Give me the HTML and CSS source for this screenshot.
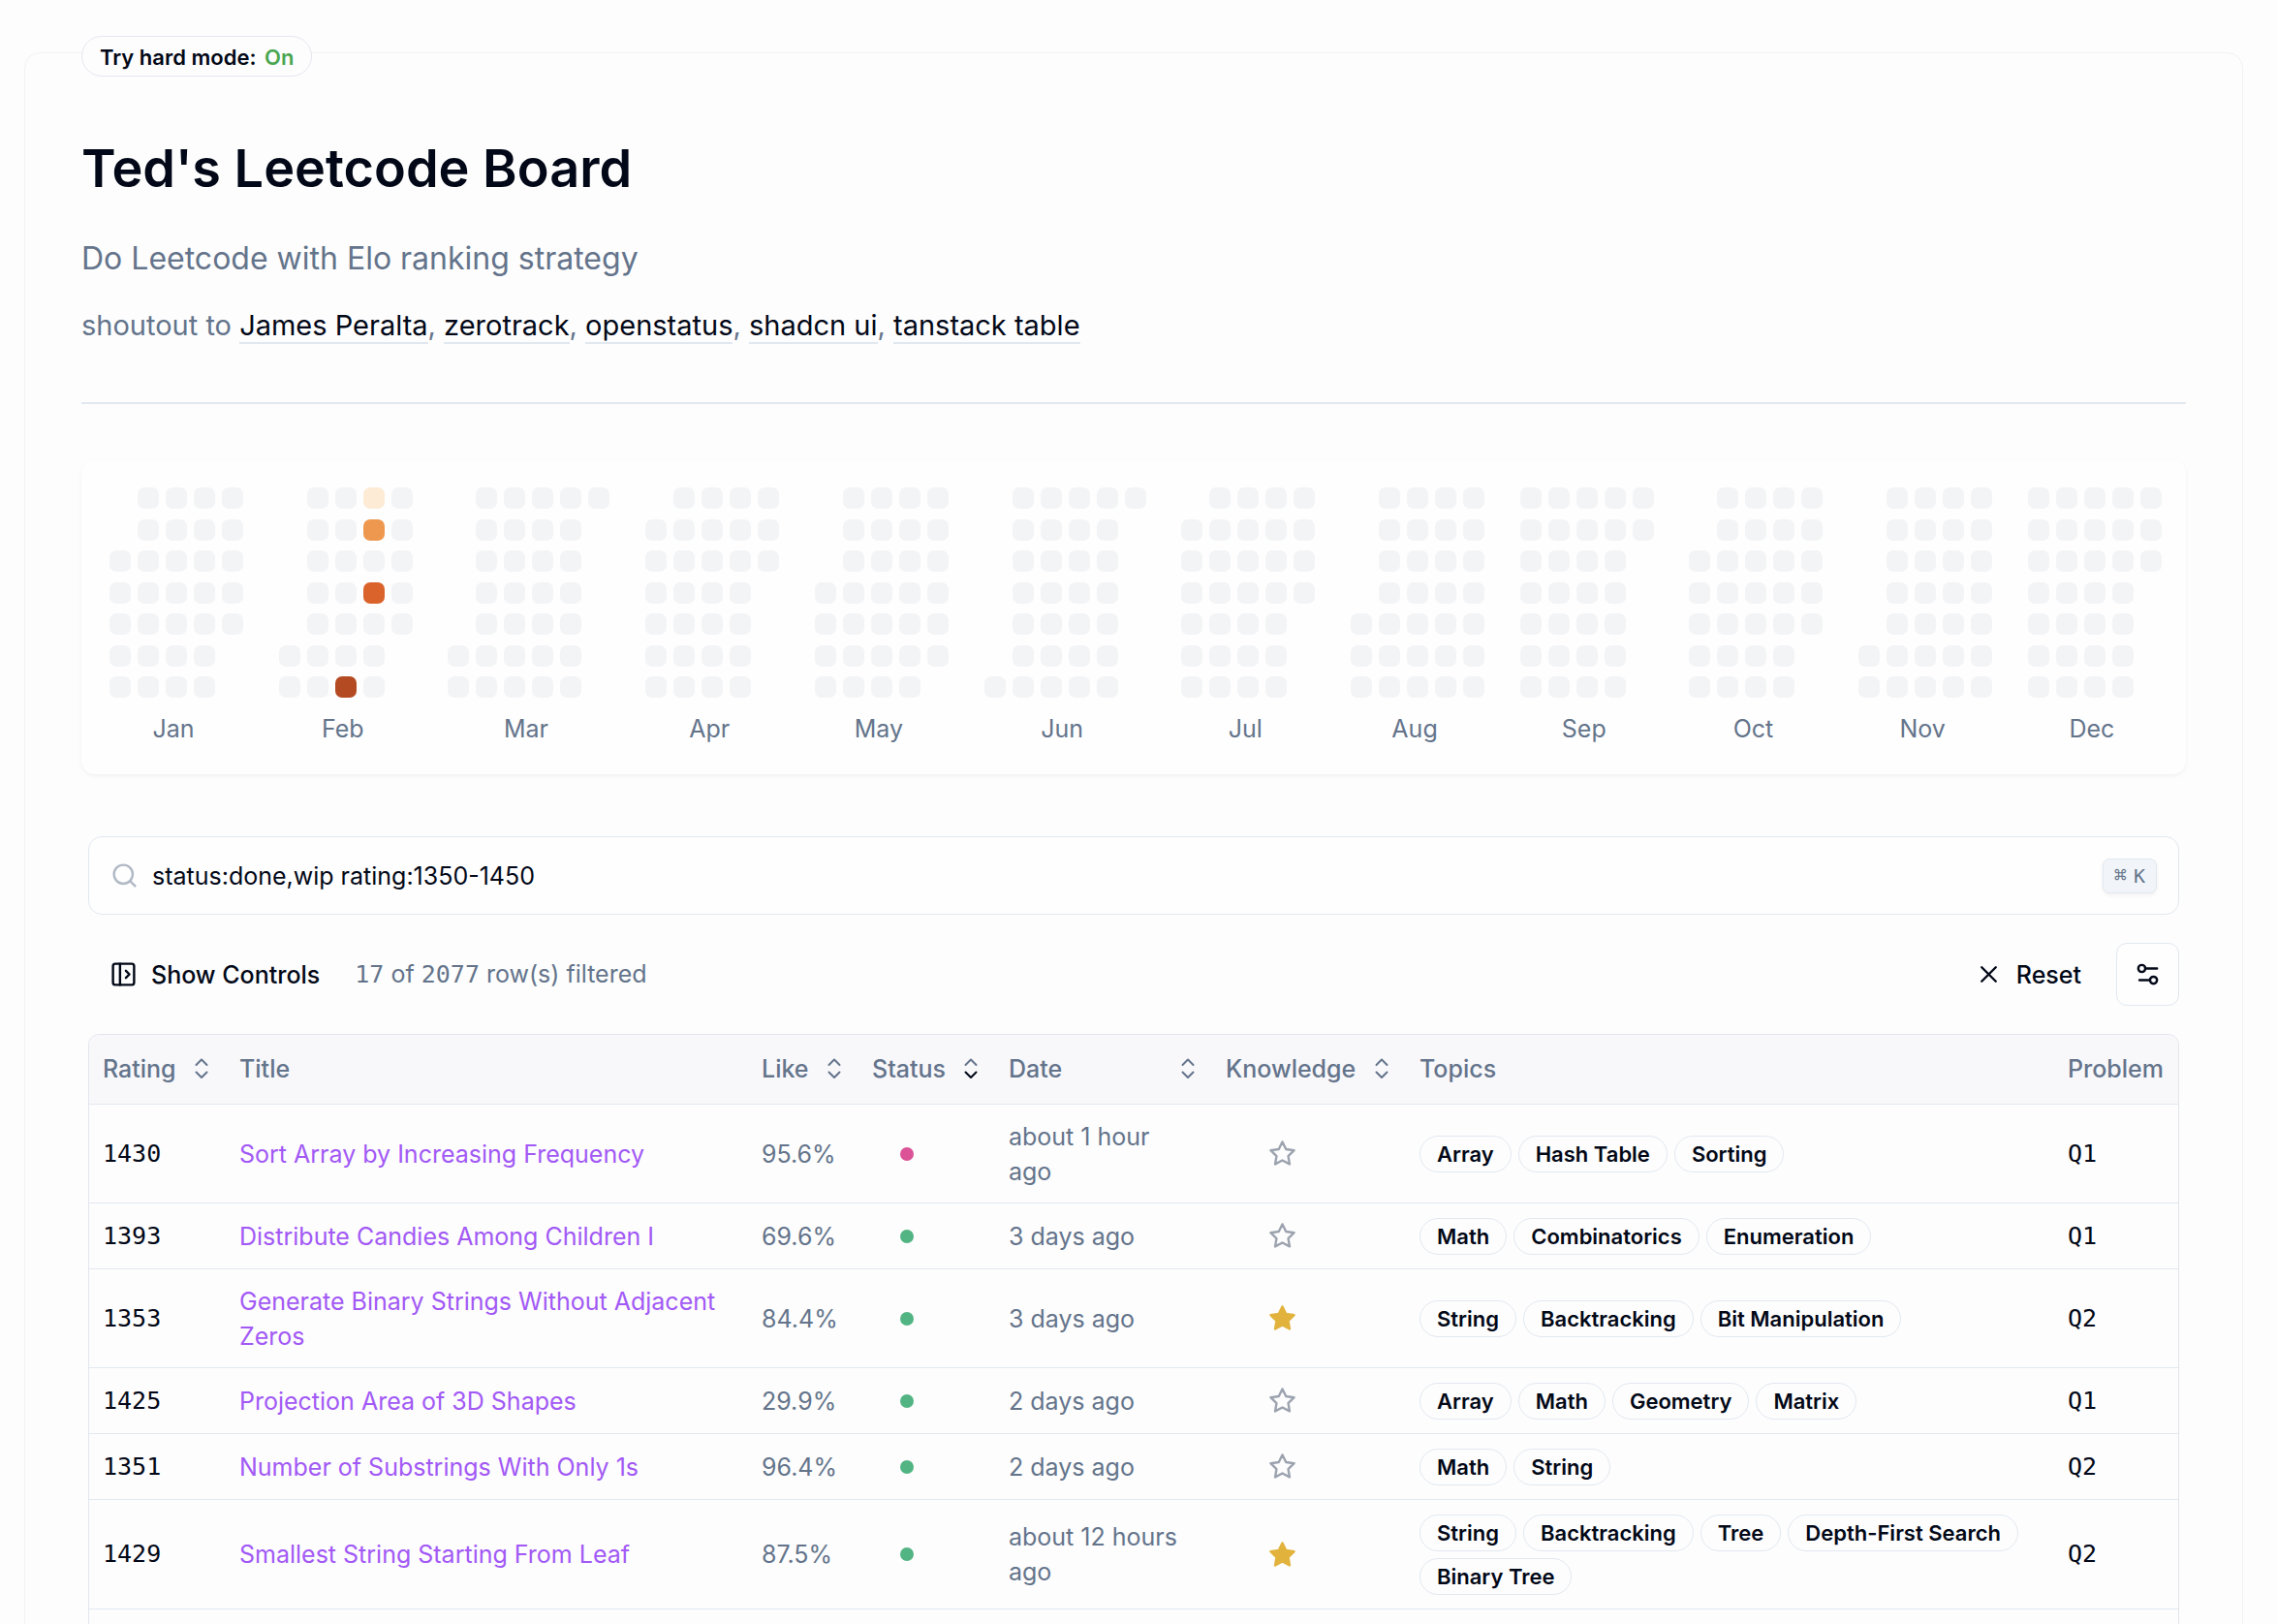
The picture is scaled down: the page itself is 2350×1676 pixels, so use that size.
FILE: index.html
```html
<!DOCTYPE html>
<html lang="en">
<head>
<meta charset="utf-8">
<meta name="viewport" content="width=device-width, initial-scale=1">
<title>Ted's Leetcode Board</title>
<link rel="stylesheet" href="styles.css">
</head>
<body>
<svg class="sprite" aria-hidden="true">
  <symbol id="sort" viewBox="0 0 22 24"><path class="up" d="M5.5 8 11 2.5 16.500 8"/><path class="down" d="M5.500 15.500 11 21 16.500 15.500"/></symbol>
  <symbol id="star" viewBox="0 0 24 24"><path d="M12 2 15.090 8.260 22 9.270 17 14.140 18.180 21.020 12 17.770 5.820 21.020 7 14.140 2 9.270 8.910 8.260z"/></symbol>
</svg>
<main class="board">
  <button class="mode" type="button">Try hard mode: <span class="mode-state">On</span></button>
  <header class="intro">
    <h1>Ted's Leetcode Board</h1>
    <p class="lead">Do Leetcode with Elo ranking strategy</p>
    <p class="credits">shoutout to <a href="#">James Peralta</a>, <a href="#">zerotrack</a>, <a href="#">openstatus</a>, <a href="#">shadcn ui</a>, <a href="#">tanstack table</a></p>
  </header>
  <section class="calendar" id="calendar" aria-label="Activity calendar"></section>
  <section class="problems">
    <div class="search">
      <svg class="icon" viewBox="0 0 24 24" aria-hidden="true"><circle cx="11" cy="11" r="8"/><path d="m21 21-4.300-4.300"/></svg>
      <input type="text" aria-label="Filter problems" value="status:done,wip rating:1350-1450">
      <kbd><span class="cmd">⌘</span>K</kbd>
    </div>
    <div class="toolbar">
      <button class="ghost" type="button"><svg class="icon" viewBox="0 0 24 24" aria-hidden="true"><rect x="3" y="3" width="18" height="18" rx="2"/><path d="M9 3v18M14 9l3 3-3 3"/></svg>Show Controls</button>
      <p class="count"><span class="mono">17</span> of <span class="mono">2077</span> row(s) filtered</p>
      <button class="ghost reset" type="button"><svg class="icon" viewBox="0 0 24 24" aria-hidden="true"><path d="M18 6 6 18M6 6l12 12"/></svg>Reset</button>
      <button class="square" type="button" aria-label="View options"><svg class="icon" viewBox="0 0 24 24" aria-hidden="true"><path d="M20 7h-9M14 17H5"/><circle cx="17" cy="17" r="3"/><circle cx="7" cy="7" r="3"/></svg></button>
    </div>
    <div class="table-frame">
      <table>
        <colgroup><col class="c-rating"><col class="c-title"><col class="c-like"><col class="c-status"><col class="c-date"><col class="c-know"><col><col class="c-problem"></colgroup>
        <thead>
          <tr>
            <th scope="col"><button class="sort" type="button">Rating<svg aria-hidden="true"><use href="#sort"/></svg></button></th>
            <th scope="col">Title</th>
            <th scope="col"><button class="sort" type="button">Like<svg aria-hidden="true"><use href="#sort"/></svg></button></th>
            <th scope="col" aria-sort="descending"><button class="sort sorted" type="button">Status<svg aria-hidden="true"><use href="#sort"/></svg></button></th>
            <th scope="col"><button class="sort" type="button">Date<svg aria-hidden="true"><use href="#sort"/></svg></button></th>
            <th scope="col"><button class="sort" type="button">Knowledge<svg aria-hidden="true"><use href="#sort"/></svg></button></th>
            <th scope="col">Topics</th>
            <th scope="col">Problem</th>
          </tr>
        </thead>
        <tbody>
          <tr><td class="num">1430</td><td><a href="#">Sort Array by Increasing Frequency</a></td><td>95.6%</td><td><span class="dot wip"></span></td><td><div class="date">about 1 hour ago</div></td><td><svg class="star" aria-hidden="true"><use href="#star"/></svg></td><td><div class="tags"><span>Array</span><span>Hash Table</span><span>Sorting</span></div></td><td class="num">Q1</td></tr>
          <tr><td class="num">1393</td><td><a href="#">Distribute Candies Among Children I</a></td><td>69.6%</td><td><span class="dot"></span></td><td><div class="date">3 days ago</div></td><td><svg class="star" aria-hidden="true"><use href="#star"/></svg></td><td><div class="tags"><span>Math</span><span>Combinatorics</span><span>Enumeration</span></div></td><td class="num">Q1</td></tr>
          <tr><td class="num">1353</td><td><a href="#">Generate Binary Strings Without Adjacent Zeros</a></td><td>84.4%</td><td><span class="dot"></span></td><td><div class="date">3 days ago</div></td><td><svg class="star known" aria-hidden="true"><use href="#star"/></svg></td><td><div class="tags"><span>String</span><span>Backtracking</span><span>Bit Manipulation</span></div></td><td class="num">Q2</td></tr>
          <tr><td class="num">1425</td><td><a href="#">Projection Area of 3D Shapes</a></td><td>29.9%</td><td><span class="dot"></span></td><td><div class="date">2 days ago</div></td><td><svg class="star" aria-hidden="true"><use href="#star"/></svg></td><td><div class="tags"><span>Array</span><span>Math</span><span>Geometry</span><span>Matrix</span></div></td><td class="num">Q1</td></tr>
          <tr><td class="num">1351</td><td><a href="#">Number of Substrings With Only 1s</a></td><td>96.4%</td><td><span class="dot"></span></td><td><div class="date">2 days ago</div></td><td><svg class="star" aria-hidden="true"><use href="#star"/></svg></td><td><div class="tags"><span>Math</span><span>String</span></div></td><td class="num">Q2</td></tr>
          <tr><td class="num">1429</td><td><a href="#">Smallest String Starting From Leaf</a></td><td>87.5%</td><td><span class="dot"></span></td><td><div class="date">about 12 hours ago</div></td><td><svg class="star known" aria-hidden="true"><use href="#star"/></svg></td><td><div class="tags"><span>String</span><span>Backtracking</span><span>Tree</span><span>Depth-First Search</span><span>Binary Tree</span></div></td><td class="num">Q2</td></tr>
          <tr><td></td><td></td><td></td><td></td><td></td><td></td><td><div class="tags"><span>Array</span><span>Math</span><span>Simulation</span><span>Combinatorics</span></div></td><td></td></tr>
        </tbody>
      </table>
    </div>
  </section>
</main>
<script src="calendar.js"></script>
</body>
</html>
```
FILE: styles.css
```css
* { box-sizing: border-box; }
body {
  margin: 0;
  padding: 54px 35px 0 25px;
  background: #fdfdfd;
  color: #020817;
  font: 400 25px/36px Inter, "Liberation Sans", sans-serif;
}
h1, p { margin: 0; }
a { color: inherit; text-decoration: none; }
button { font: inherit; color: inherit; background: none; border: 0; padding: 0; cursor: pointer; }
.sprite { display: none; }
.icon { width: 29px; height: 29px; flex: none; fill: none; stroke: currentColor; stroke-width: 2; stroke-linecap: round; stroke-linejoin: round; }
.mono, .num, kbd { font-family: "DejaVu Sans Mono", "Liberation Mono", monospace; }

.board { position: relative; padding: 0 58px; border: 1px solid #f1f2f4; border-radius: 16px; }
.mode {
  position: absolute; top: -18px; left: 58px;
  height: 42px; padding: 0 18px;
  border: 1px solid #e5e7ef; border-radius: 21px; background: #fdfdfd;
  font-size: 22px; font-weight: 600; line-height: 42px; white-space: nowrap;
}
.mode-state { margin-left: 3px; color: #4aa651; }

.intro { display: flex; flex-direction: column; padding: 86px 0 57px; border-bottom: 2px solid #e2e8f0; }
h1 { font-size: 54px; font-weight: 600; line-height: 65px; }
.lead { margin-top: 36px; color: #64748b; font-size: 32px; line-height: 50px; }
.credits { margin-top: 22px; color: #64748b; font-size: 29px; line-height: 44px; }
.credits a { color: #020817; border-bottom: 2px solid #e2e8f0; }

.calendar {
  display: flex; justify-content: space-between;
  margin-top: 58px; padding: 28px 25px 29px 29px;
  border-radius: 14px; background: #fefefe; box-shadow: 0 2px 4px rgba(0, 0, 0, .05);
}
.days { display: grid; height: 217px; grid-template-rows: repeat(7, 22px); grid-auto-columns: 22px; grid-auto-flow: column; column-gap: 7px; align-content: space-between; }
.day { border-radius: 7px; background: #f3f4f6; }
.level-1 { background: #fdebd6; }
.level-2 { background: #ee984f; }
.level-3 { background: #da622b; }
.level-4 { background: #b44a22; }
.month-name { margin-top: 14px; padding-right: 6px; color: #64748b; text-align: center; }

.problems { padding: 64px 7px 0; }
.search { display: flex; align-items: center; gap: 14px; height: 81px; padding: 0 22px; border: 1px solid #e2e8f0; border-radius: 14px; background: #fefefe; }
.search .icon { color: #b1b9c5; }
.search input { flex: 1; min-width: 0; height: 36px; padding: 0; border: 0; outline: 0; background: none; color: inherit; font: inherit; }
kbd { display: flex; align-items: center; gap: 7px; height: 36px; padding: 0 11px; border: 1px solid #e2e8f0; border-radius: 7px; background: #f1f5f9; box-shadow: 0 2px 4px rgba(0, 0, 0, .05); color: #64748b; font-size: 20px; }
.cmd { font-size: 22px; }

.toolbar { display: flex; align-items: center; margin-top: 29px; padding-left: 22px; }
.ghost { display: flex; align-items: center; gap: 14px; font-weight: 500; }
.count { margin-left: 36px; color: #64748b; }
.reset { margin-left: auto; margin-right: 36px; }
.square { display: grid; place-items: center; width: 65px; height: 65px; border: 1px solid #e2e8f0; border-radius: 11px; background: #fefefe; }

.table-frame { margin-top: 29px; border: 1px solid #e2e5ee; border-radius: 11px; overflow: hidden; }
table { width: 100%; table-layout: fixed; border-collapse: collapse; }
.c-rating { width: 141px; }
.c-title { width: 539px; }
.c-like { width: 114px; }
.c-status { width: 141px; }
.c-date { width: 224px; }
.c-know { width: 200px; }
.c-problem { width: 128px; }
th { height: 71px; padding: 0 14px; background: #f8f8fb; color: #64748b; font-weight: 500; text-align: left; }
tr { border-bottom: 1px solid #e2e8f0; }
td { padding: 15px 14px 14px; color: #64748b; vertical-align: middle; }
td a { color: #a259f5; }
.sort { display: flex; align-items: center; justify-content: space-between; width: 100%; }
.sort svg { width: 22px; height: 24px; fill: none; stroke: currentColor; stroke-width: 2; stroke-linecap: round; stroke-linejoin: round; }
.sorted { --down: #020817; }
.down { stroke: var(--down, currentColor); }
.num { color: #020817; }
.dot { display: block; width: 14px; height: 14px; margin-left: 29px; border-radius: 50%; background: #53b483; }
.wip { background: #db5297; }
.date { max-width: 180px; }
.star { display: block; width: 29px; height: 29px; margin-left: 44px; fill: none; stroke: #9ca3af; stroke-width: 2; stroke-linecap: round; stroke-linejoin: round; }
.known { fill: #e2b33c; stroke: #e2b33c; }
.tags { display: flex; flex-wrap: wrap; gap: 7px; }
.tags span { height: 38px; padding: 0 17px; border: 1px solid #e2e8f0; border-radius: 19px; color: #020817; font-size: 22px; font-weight: 600; line-height: 36px; white-space: nowrap; }
```
FILE: calendar.js
```js
const YEAR = 2025;
const levels = { "2-16": 4, "2-17": 1, "2-18": 2, "2-20": 3 };
const names = ["Jan", "Feb", "Mar", "Apr", "May", "Jun", "Jul", "Aug", "Sep", "Oct", "Nov", "Dec"];
const calendar = document.getElementById("calendar");

names.forEach((name, m) => {
  const month = document.createElement("div");
  const grid = document.createElement("div");
  grid.className = "days";
  const count = new Date(YEAR, m + 1, 0).getDate();
  // Weeks start on Monday
  const offset = (new Date(YEAR, m, 1).getDay() + 6) % 7;
  for (let d = 1; d <= count; d++) {
    const cell = document.createElement("span");
    const level = levels[(m + 1) + "-" + d];
    cell.className = "day" + (level ? " level-" + level : "");
    if (d === 1) cell.style.gridRowStart = offset + 1;
    grid.append(cell);
  }
  const label = document.createElement("div");
  label.className = "month-name";
  label.textContent = name;
  month.append(grid, label);
  calendar.append(month);
});
```
